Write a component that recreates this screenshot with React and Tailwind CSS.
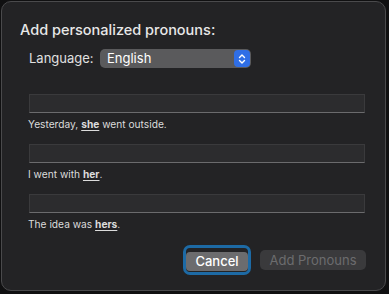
import React from 'react'

const Field = ({ children }) => (
  <div className="flex flex-col">
    <div className="w-[336px] h-[19px] bg-[#2c2c2e] border border-[#3a3a3c] border-b-[#6b6b6d]"></div>
    <p className="mt-[4px] h-[14px] text-[10.2px] leading-[14px] text-[#dcdcdc] -ml-[1px]">{children}</p>
  </div>
)

const Pronoun = ({ children }) => (
  <span className="font-bold underline underline-offset-2 decoration-1">{children}</span>
)

const App = () => {
  return (
    <div className="w-[389px] h-[294px] bg-[#101011] pl-[1px] pt-[1px]" style={{ fontFamily: 'Inter, "Liberation Sans", sans-serif' }}>
      <div className="w-[385px] h-[290px] rounded-[10px] border border-[#4a4a4c] bg-[#232325] flex flex-col">
        <h1 className="pl-[18px] pt-[19px] text-[14.5px] leading-[18px] font-medium text-[#e8e8e8]">Add personalized pronouns:</h1>
        <div className="flex items-center pl-[27px] mt-[10px]">
          <span className="text-[13px] text-[#e0e0e0] w-[71px]">Language:</span>
          <div className="w-[151px] h-[19px] rounded-[5px] bg-[#5a5a5c] flex items-center justify-between pl-[7px] pr-[1px]">
            <span className="text-[13px] text-white">English</span>
            <div className="w-[16px] h-[17px] rounded-[4px] bg-[#2f6ee6] flex items-center justify-center">
              <svg width="8" height="12" viewBox="0 0 8 12" fill="none" stroke="white" strokeWidth="1.4" strokeLinecap="round" strokeLinejoin="round">
                <path d="M1.5 4.5 L4 2 L6.5 4.5" />
                <path d="M1.5 7.5 L4 10 L6.5 7.5" />
              </svg>
            </div>
          </div>
        </div>
        <div className="flex flex-col gap-[13px] pl-[27px] mt-[25px]">
          <Field>Yesterday, <Pronoun>she</Pronoun> went outside.</Field>
          <Field>I went with <Pronoun>her</Pronoun>.</Field>
          <Field>The idea was <Pronoun>hers</Pronoun>.</Field>
        </div>
        <div className="flex justify-end items-center gap-[9px] pr-[19px] mt-[14px]">
          <div className="rounded-[7px] border-[3px] border-[#1d6aa5]">
            <button className="w-[62px] h-[19px] rounded-[4px] bg-[#6c6c6e] text-[13px] leading-[19px] font-medium text-white">Cancel</button>
          </div>
          <button className="w-[106px] h-[20px] rounded-[5px] bg-[#3a3a3c] text-[13px] leading-[20px] text-[#6c6c6e]">Add Pronouns</button>
        </div>
      </div>
    </div>
  )
}

export default App
